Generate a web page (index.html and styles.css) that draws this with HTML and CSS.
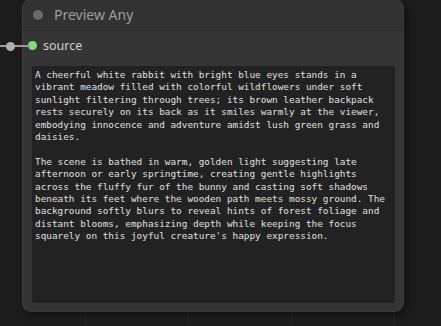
FILE: index.html
```html
<!DOCTYPE html>
<html lang="en">
<head>
    <meta charset="UTF-8">
    <title>Preview Any</title>
    <link rel="stylesheet" href="styles.css">
</head>
<body>
    <div class="canvas">
        <!-- incoming link -->
        <div class="link">
            <span class="link-line"></span>
            <span class="link-dot"></span>
        </div>

        <div class="node">
            <div class="node-title">
                <span class="title-dot"></span>
                <span class="title-text">Preview Any</span>
            </div>
            <div class="node-body">
                <div class="slot">
                    <span class="slot-dot"></span>
                    <span class="slot-name">source</span>
                </div>
                <div class="preview">A cheerful white rabbit with bright blue eyes stands in a
vibrant meadow filled with colorful wildflowers under soft
sunlight filtering through trees; its brown leather backpack
rests securely on its back as it smiles warmly at the viewer,
embodying innocence and adventure amidst lush green grass and
daisies.

The scene is bathed in warm, golden light suggesting late
afternoon or early springtime, creating gentle highlights
across the fluffy fur of the bunny and casting soft shadows
beneath its feet where the wooden path meets mossy ground. The
background softly blurs to reveal hints of forest foliage and
distant blooms, emphasizing depth while keeping the focus
squarely on this joyful creature's happy expression.</div>
            </div>
        </div>
    </div>
</body>
</html>
```

FILE: styles.css
```css
* {
    box-sizing: border-box;
    margin: 0;
    padding: 0;
}

body {
    background: #1c1c1c;
    font-family: "Noto Sans", Arial, sans-serif;
    overflow: hidden;
}

/* Canvas with faint grid */
.canvas {
    position: relative;
    width: 441px;
    height: 326px;
    padding: 0 0 0 23px;
    background-color: #1c1c1c;
    background-image:
        linear-gradient(to right, #262626 1px, transparent 1px);
    background-size: 103px 100%;
    background-position: 85px 0;
}

/* Link coming into the input slot */
.link {
    position: absolute;
    left: 0;
    top: 44px;
    width: 30px;
    height: 5px;
}

.link-line {
    position: absolute;
    left: 0;
    top: 1px;
    width: 30px;
    height: 2px;
    background: #9a9a9a;
}

.link-dot {
    position: absolute;
    left: 6px;
    top: -2px;
    width: 9px;
    height: 9px;
    border-radius: 50%;
    background: #b0b0b0;
}

/* Node */
.node {
    width: 380px;
    height: 311px;
    background: #353535;
    border-radius: 8px;
    box-shadow: 0 0 0 1px #3c3c3c, 3px 3px 8px rgba(0, 0, 0, 0.5);
    display: flex;
    flex-direction: column;
}

.node-title {
    height: 31px;
    display: flex;
    align-items: center;
    padding-left: 10px;
    background: #323232;
    border-radius: 8px 8px 0 0;
    border-bottom: 1px solid #2b2b2b;
}

.title-dot {
    width: 10px;
    height: 10px;
    border-radius: 50%;
    background: #6a6a6a;
    margin-right: 11px;
}

.title-text {
    color: #9c9c9c;
    font-size: 14px;
    margin-top: -1px;
}

.node-body {
    flex: 1;
    display: flex;
    flex-direction: column;
    padding: 0 8px 8px 9px;
}

.slot {
    height: 29px;
    margin-bottom: 6px;
    display: flex;
    align-items: center;
}

.slot-dot {
    width: 9px;
    height: 9px;
    border-radius: 50%;
    background: #7ddc7d;
    margin-left: -4px;
    margin-right: 6px;
}

.slot-name {
    color: #d0d0d0;
    font-size: 12.5px;
}

/* Text preview area */
.preview {
    flex: 1;
    background: #222222;
    border-radius: 2px;
    color: #e0e0e0;
    font-family: "DejaVu Sans Mono", "Liberation Mono", monospace;
    font-size: 9.4px;
    line-height: 12.4px;
    white-space: pre;
    padding: 3px 3px;
    overflow: hidden;
}
```
